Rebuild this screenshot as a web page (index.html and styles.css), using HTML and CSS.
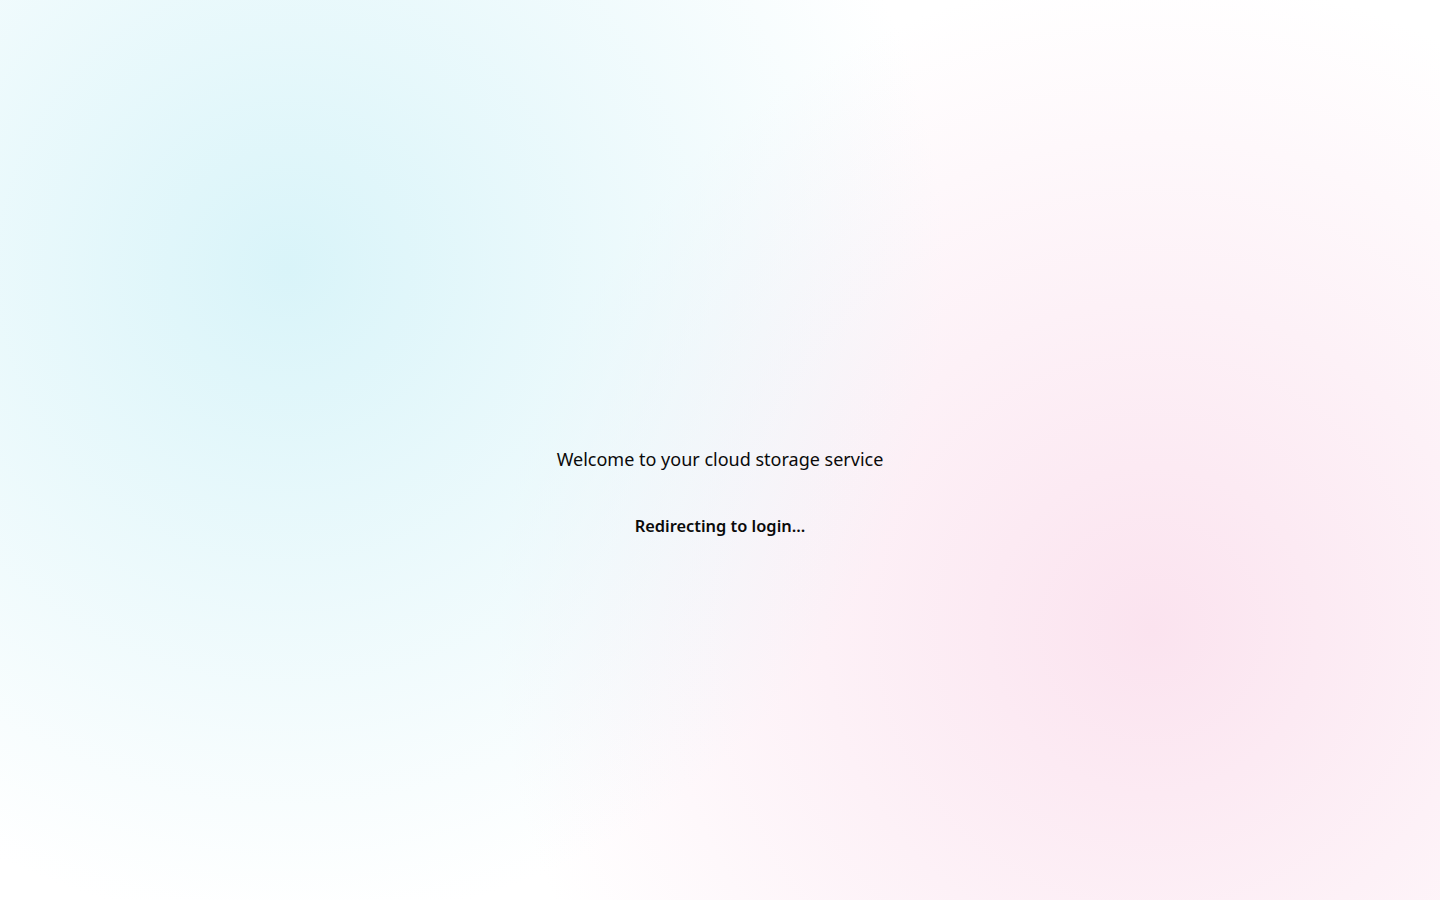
FILE: index.html
```html
<!DOCTYPE html>
<html lang="en">
<head>
<meta charset="utf-8">
<title>Cloud Storage</title>
<link rel="stylesheet" href="styles.css">
</head>
<body>
<main class="splash">
  <h1 class="welcome">Welcome to your cloud storage service</h1>
  <p class="status">Redirecting to login...</p>
</main>
</body>
</html>
```
FILE: styles.css
```css
html, body {
  margin: 0;
  height: 100%;
}
body {
  font-family: "Noto Sans", "Open Sans", sans-serif;
  color: #0a0a0a;
  background-color: #ffffff;
  background-image:
    radial-gradient(circle at 20% 30%, #d9f4f9 0%, rgba(217, 244, 249, 0) 50%),
    radial-gradient(circle at 80% 70%, #fbe3ef 0%, rgba(251, 227, 239, 0) 50%);
  background-repeat: no-repeat;
}
.splash {
  min-height: 100vh;
  box-sizing: border-box;
  padding-top: 84px;
  display: flex;
  flex-direction: column;
  align-items: center;
  justify-content: center;
  gap: 43px;
}
.welcome {
  margin: 0;
  font-size: 18px;
  font-weight: 400;
  line-height: 25px;
}
.status {
  margin: 0;
  font-size: 16.4px;
  font-weight: 600;
  line-height: 22px;
}
```
